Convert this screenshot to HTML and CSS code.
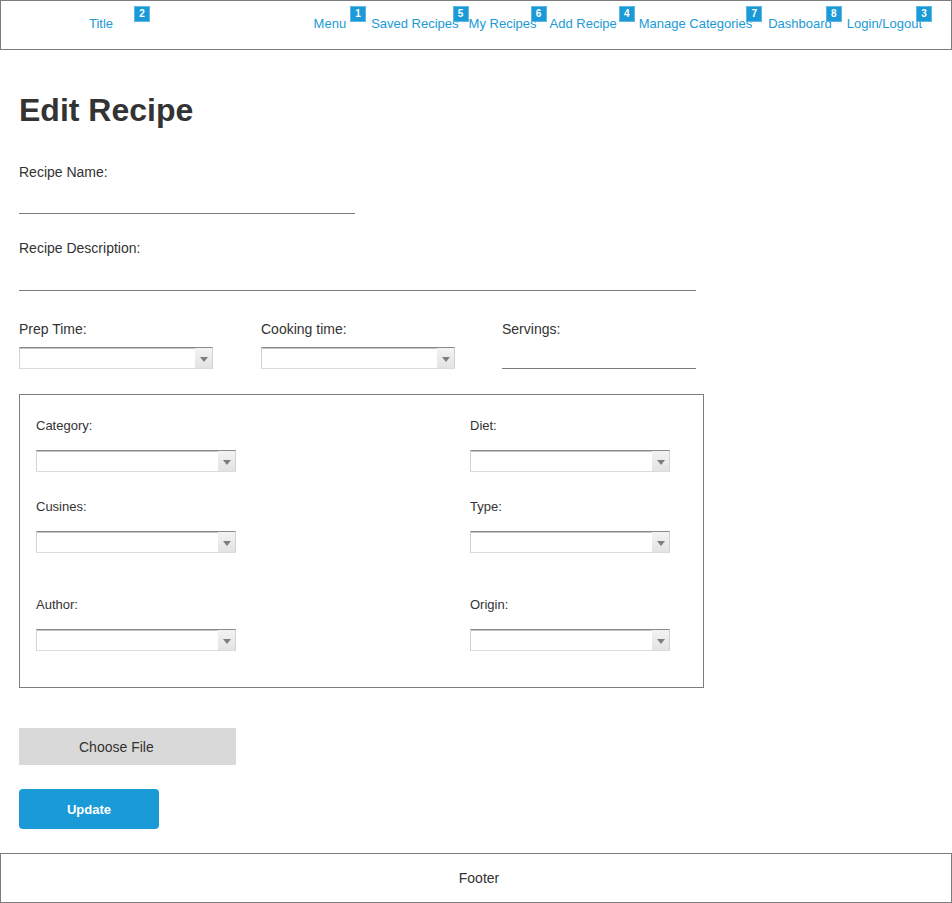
FILE: index.html
```html
<!DOCTYPE html>
<html lang="en">
<head>
<meta charset="utf-8">
<title>Edit Recipe</title>
<link rel="stylesheet" href="styles.css">
</head>
<body>
<header class="site-header">
  <a class="brand" href="#">Title<span class="badge badge-title">2</span></a>
  <nav class="nav">
    <a class="nav-link" href="#">Menu<span class="badge badge-wide">1</span></a>
    <a class="nav-link" href="#">Saved Recipes<span class="badge">5</span></a>
    <a class="nav-link" href="#">My Recipes<span class="badge">6</span></a>
    <a class="nav-link" href="#">Add Recipe<span class="badge badge-mid">4</span></a>
    <a class="nav-link" href="#">Manage Categories<span class="badge">7</span></a>
    <a class="nav-link" href="#">Dashboard<span class="badge">8</span></a>
    <a class="nav-link" href="#">Login/Logout<span class="badge">3</span></a>
  </nav>
</header>

<main class="content">
  <h1 class="page-title">Edit Recipe</h1>

  <label class="field-label first-label">Recipe Name:</label>
  <div class="line-input name-input"></div>

  <label class="field-label desc-label">Recipe Description:</label>
  <div class="line-input desc-input"></div>

  <div class="time-row">
    <div class="time-field">
      <label class="field-label">Prep Time:</label>
      <div class="select"><span class="select-value"></span><span class="select-arrow"><span class="tri"></span></span></div>
    </div>
    <div class="time-field">
      <label class="field-label">Cooking time:</label>
      <div class="select"><span class="select-value"></span><span class="select-arrow"><span class="tri"></span></span></div>
    </div>
    <div class="time-field">
      <label class="field-label">Servings:</label>
      <div class="line-input servings-input"></div>
    </div>
  </div>

  <section class="meta-box">
    <div class="meta-field">
      <label class="box-label">Category:</label>
      <div class="select box-select"><span class="select-value"></span><span class="select-arrow"><span class="tri"></span></span></div>
    </div>
    <div class="meta-field">
      <label class="box-label">Diet:</label>
      <div class="select box-select"><span class="select-value"></span><span class="select-arrow"><span class="tri"></span></span></div>
    </div>
    <div class="meta-field row-two">
      <label class="box-label">Cusines:</label>
      <div class="select box-select"><span class="select-value"></span><span class="select-arrow"><span class="tri"></span></span></div>
    </div>
    <div class="meta-field row-two">
      <label class="box-label">Type:</label>
      <div class="select box-select"><span class="select-value"></span><span class="select-arrow"><span class="tri"></span></span></div>
    </div>
    <div class="meta-field row-three">
      <label class="box-label">Author:</label>
      <div class="select box-select"><span class="select-value"></span><span class="select-arrow"><span class="tri"></span></span></div>
    </div>
    <div class="meta-field row-three">
      <label class="box-label">Origin:</label>
      <div class="select box-select"><span class="select-value"></span><span class="select-arrow"><span class="tri"></span></span></div>
    </div>
  </section>

  <button class="file-button" type="button">Choose File</button>
  <button class="update-button" type="button">Update</button>
</main>

<footer class="site-footer">Footer</footer>
</body>
</html>
```

FILE: styles.css
```css
* { box-sizing: border-box; }

html, body {
  margin: 0;
  padding: 0;
  background: #ffffff;
}

body {
  font-family: "Liberation Sans", Arial, sans-serif;
  color: #333333;
}

/* Header */
.site-header {
  display: flex;
  align-items: center;
  height: 50px;
  border: 1px solid #7d7d7d;
  padding: 0 29px 3px 88px;
}

.brand,
.nav-link {
  position: relative;
  font-size: 13px;
  line-height: 15px;
  color: #1a9ad6;
  text-decoration: none;
  white-space: nowrap;
}

.nav {
  display: flex;
  margin-left: auto;
}

.nav-link:nth-child(2) { margin-left: 25px; }
.nav-link:nth-child(3) { margin-left: 10px; }
.nav-link:nth-child(4) { margin-left: 13px; }
.nav-link:nth-child(5) { margin-left: 22px; }
.nav-link:nth-child(6) { margin-left: 16px; }
.nav-link:nth-child(7) { margin-left: 15px; }

.badge {
  position: absolute;
  top: -10px;
  left: calc(100% - 6px);
  width: 16px;
  height: 16px;
  background: #1a9ad6;
  border: 1px solid #5fb7e3;
  color: #ffffff;
  font-size: 10px;
  font-weight: bold;
  line-height: 14px;
  text-align: center;
}

.badge-title { left: calc(100% + 21px); }
.badge-wide { left: calc(100% + 4px); }
.badge-mid { left: calc(100% + 2px); }

/* Main */
.content {
  padding: 0 19px;
}

.page-title {
  margin: 42px 0 0;
  font-size: 32px;
  line-height: 37px;
  font-weight: bold;
  color: #333333;
}

.field-label {
  display: block;
  font-size: 14px;
  line-height: 16px;
  color: #333333;
}

.first-label { margin-top: 35px; }
.desc-label { margin-top: 26px; }

.line-input {
  height: 34px;
  border-bottom: 1px solid #7a7a7a;
}

.name-input { width: 336px; }
.desc-input { width: 677px; height: 35px; }

.time-row {
  display: grid;
  grid-template-columns: 242px 241px 194px;
  margin-top: 30px;
}

.time-row .select {
  margin-top: 10px;
  width: 194px;
}

.servings-input {
  height: 32px;
  width: 194px;
}

/* Select lookalike */
.select {
  display: flex;
  height: 22px;
  border-top: 1px solid #8a8a8a;
  border-left: 1px solid #d2d2d2;
  border-right: 1px solid #d2d2d2;
  border-bottom: 1px solid #dcdcdc;
  box-shadow: inset 0 1px 0 #c4c4c4;
  background: #ffffff;
}

.select-value { flex: 1; }

.select-arrow {
  display: flex;
  align-items: center;
  justify-content: center;
  width: 17px;
  background: linear-gradient(#f3f3f3, #e3e3e3);
}

.tri {
  width: 0;
  height: 0;
  border-left: 4px solid transparent;
  border-right: 4px solid transparent;
  border-top: 5px solid #7e7e7e;
  margin-top: 2px;
}

/* Meta box */
.meta-box {
  display: grid;
  grid-template-columns: 434px 1fr;
  width: 685px;
  margin-top: 25px;
  padding: 23px 16px 36px;
  border: 1px solid #7d7d7d;
}

.box-label {
  display: block;
  font-size: 13px;
  line-height: 15px;
  color: #333333;
}

.box-select {
  margin-top: 17px;
  width: 200px;
}

.row-two { margin-top: 27px; }
.row-three { margin-top: 44px; }

/* Buttons */
.file-button {
  display: block;
  margin-top: 40px;
  width: 217px;
  height: 37px;
  border: 0;
  background: #d9d9d9;
  font-family: "Liberation Sans", Arial, sans-serif;
  font-size: 14px;
  color: #333333;
  text-align: left;
  padding: 0 0 0 60px;
}

.update-button {
  display: block;
  margin-top: 24px;
  width: 140px;
  height: 40px;
  border: 0;
  border-radius: 4px;
  background: #1a9ad6;
  font-family: "Liberation Sans", Arial, sans-serif;
  font-size: 13px;
  font-weight: bold;
  color: #ffffff;
  padding: 0;
}

/* Footer */
.site-footer {
  margin-top: 24px;
  height: 50px;
  border: 1px solid #7d7d7d;
  display: flex;
  align-items: center;
  justify-content: center;
  padding-left: 6px;
  font-size: 14px;
  color: #333333;
}
```
